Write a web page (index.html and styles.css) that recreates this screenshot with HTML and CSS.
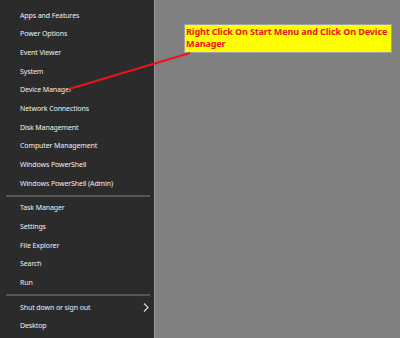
FILE: index.html
```html
<!DOCTYPE html>
<html lang="en">
<head>
    <meta charset="UTF-8">
    <title>Device Manager - Start Menu</title>
    <link rel="stylesheet" href="styles.css">
</head>
<body>
    <div class="screen">
        <!-- Win+X menu -->
        <div class="start-menu">
            <div class="menu-item">Apps and Features</div>
            <div class="menu-item">Power Options</div>
            <div class="menu-item">Event Viewer</div>
            <div class="menu-item">System</div>
            <div class="menu-item">Device Manager</div>
            <div class="menu-item">Network Connections</div>
            <div class="menu-item">Disk Management</div>
            <div class="menu-item">Computer Management</div>
            <div class="menu-item">Windows PowerShell</div>
            <div class="menu-item">Windows PowerShell (Admin)</div>
            <div class="separator"></div>
            <div class="menu-item">Task Manager</div>
            <div class="menu-item">Settings</div>
            <div class="menu-item">File Explorer</div>
            <div class="menu-item">Search</div>
            <div class="menu-item">Run</div>
            <div class="separator"></div>
            <div class="menu-item has-sub">Shut down or sign out
                <svg class="chevron" width="6" height="9" viewBox="0 0 6 9"><path d="M1 0.5 L5 4.5 L1 8.5" fill="none" stroke="#d8d8d8" stroke-width="1.2"/></svg>
            </div>
            <div class="menu-item">Desktop</div>
        </div>

        <div class="desktop">
            <div class="note">Right Click On Start Menu and Click On Device Manager</div>
        </div>

        <!-- arrow from note to menu item -->
        <svg class="pointer" width="400" height="338" viewBox="0 0 400 338">
            <line x1="69" y1="89" x2="190" y2="53" stroke="#ee1122" stroke-width="2"/>
        </svg>
    </div>
</body>
</html>
```

FILE: styles.css
```css
body {
    margin: 0;
    padding: 0;
    background: #808080;
    font-family: 'Noto Sans', 'Open Sans', sans-serif;
}

.screen {
    position: relative;
    display: flex;
    width: 400px;
    height: 338px;
    overflow: hidden;
}

.start-menu {
    width: 155px;
    height: 338px;
    padding-top: 6px;
    box-sizing: border-box;
    background: #2b2b2b;
    border-right: 1px solid #9a9a9a;
    flex-shrink: 0;
}

.menu-item {
    display: flex;
    align-items: center;
    justify-content: space-between;
    height: 18.67px;
    padding: 0 5px 0 20px;
    font-size: 7px;
    letter-spacing: -0.1px;
    color: #f0f0f0;
    white-space: nowrap;
}

.separator {
    height: 2px;
    margin: 2px 4px 2px 6px;
    background: #555555;
}

.desktop {
    flex: 1;
    padding: 24px 8px 0 29px;
}

.note {
    width: 205px;
    height: 26px;
    padding: 1px 0 0 1px;
    background: #ffff00;
    border: 1px solid #a0a0a0;
    color: #ee1122;
    font-weight: bold;
    font-size: 9px;
    letter-spacing: -0.1px;
    line-height: 12px;
}

.pointer {
    position: absolute;
    left: 0;
    top: 0;
}
```
